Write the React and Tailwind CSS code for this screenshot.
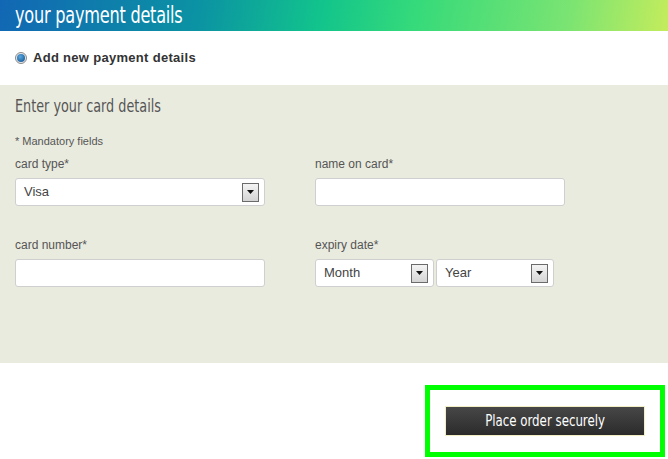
const narrow = "font-['Liberation_Sans_Narrow','DejaVu_Sans_Condensed',sans-serif]";

function Arrow() {
  return (
    <span className="flex h-[19px] w-[17px] items-center justify-center border border-[#6b6b6b] bg-[linear-gradient(#f4f4f4,#d4d4d4)]">
      <svg width="7" height="4" viewBox="0 0 7 4">
        <path d="M0 0h7L3.5 4z" fill="#111" />
      </svg>
    </span>
  );
}

function Select({ value, className }) {
  return (
    <div
      className={`flex h-[28px] items-center justify-between rounded-[3px] border border-[#cfcfcf] bg-white pl-[8px] pr-[5px] text-[13px] text-[#444] ${className}`}
    >
      <span>{value}</span>
      <Arrow />
    </div>
  );
}

function Field({ label, children }) {
  return (
    <div className="flex flex-col">
      <label className="mb-[7px] text-[12px] leading-[14px] text-[#555]">{label}</label>
      {children}
    </div>
  );
}

function Input() {
  return <div className="h-[28px] w-[250px] rounded-[3px] border border-[#cfcfcf] bg-white" />;
}

export default function App() {
  return (
    <div className="h-[459px] w-[668px] overflow-hidden bg-white font-['Liberation_Sans',Arial,sans-serif]">
      <div className="flex h-[31px] items-center bg-[linear-gradient(100deg,#1267b4_0%,#0b93a3_30%,#12c48c_48%,#35da7a_62%,#7be472_85%,#c4ec5c_100%)] px-[15px]">
        <h1 className={`${narrow} inline-block origin-left scale-x-[0.78] text-[23px] leading-none tracking-[-0.3px] text-white`}>
          your payment details
        </h1>
      </div>

      <div className="flex h-[54px] items-center gap-[6px] pl-[15px]">
        <span className="flex h-[12px] w-[12px] items-center justify-center rounded-full border border-[#8a8a8a] bg-[#e8e8e8]">
          <span className="h-[8px] w-[8px] rounded-full bg-[radial-gradient(circle_at_40%_35%,#5aa7e0,#0d4f8c)]" />
        </span>
        <span className="text-[13px] font-bold tracking-[0.3px] text-[#333]">Add new payment details</span>
      </div>

      <div className="h-[278px] bg-[#eaebdf] px-[15px] pt-[10px]">
        <h2 className={`${narrow} inline-block origin-left scale-x-[0.79] text-[18px] leading-[22px] text-[#555]`}>
          Enter your card details
        </h2>
        <p className="mt-[16px] text-[11px] leading-[12px] text-[#555]">* Mandatory fields</p>

        <div className="mt-[10px] grid grid-cols-[300px_250px] gap-y-[32px]">
          <Field label="card type*">
            <Select value="Visa" className="w-[250px]" />
          </Field>
          <Field label="name on card*">
            <Input />
          </Field>
          <Field label="card number*">
            <Input />
          </Field>
          <Field label="expiry date*">
            <div className="flex gap-[2px]">
              <Select value="Month" className="w-[119px]" />
              <Select value="Year" className="w-[118px]" />
            </div>
          </Field>
        </div>
      </div>

      <div className="flex justify-end pr-[3px] pt-[22px]">
        <div className="border-[5px] border-[#00ff00] px-[15px] py-[16px]">
          <button className="flex h-[30px] w-[200px] items-center justify-center border border-[#f3eec4] bg-[linear-gradient(#474747,#2b2b2b)]">
            <span className={`${narrow} inline-block scale-x-[0.82] text-[16px] text-white`}>
              Place order securely
            </span>
          </button>
        </div>
      </div>
    </div>
  );
}
